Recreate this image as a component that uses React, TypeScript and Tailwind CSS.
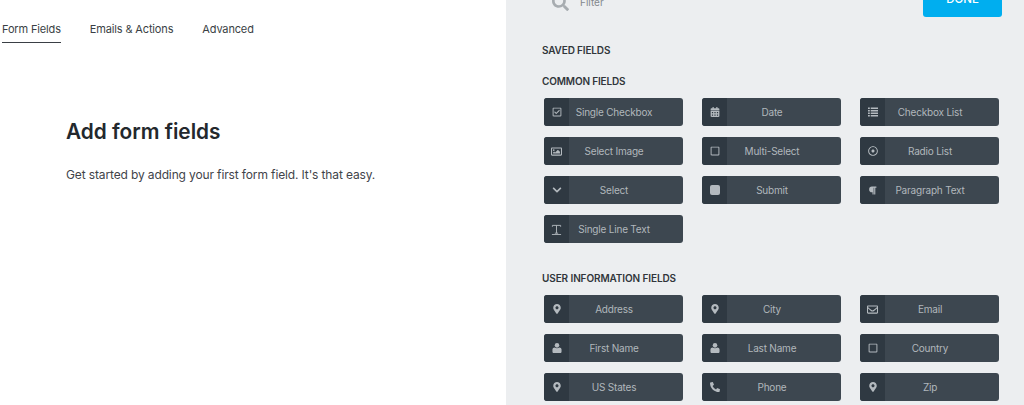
import React from "react";
import {
  FaRegCheckSquare, FaCalendarAlt, FaRegImage, FaRegSquare, FaRegDotCircle,
  FaChevronDown, FaParagraph, FaMapMarkerAlt, FaRegEnvelope, FaPhoneAlt, FaSearch,
} from "react-icons/fa";

function TextIcon({ className }: { className?: string }) {
  return (
    <svg viewBox="0 0 12 12" className={className} fill="none" stroke="currentColor">
      <path d="M1.5 3V1.5h9V3M6 1.5v8.5M4.2 10h3.6M1 11.5h10" strokeWidth="1" />
    </svg>
  );
}

function ListIcon({ className }: { className?: string }) {
  return (
    <svg viewBox="0 0 11 10" className={className} fill="currentColor">
      <path d="M0 0h2v1.6H0zM3 0h8v1.6H3zM0 2.8h2v1.6H0zM3 2.8h8v1.6H3zM0 5.6h2v1.6H0zM3 5.6h8v1.6H3zM0 8.4h2V10H0zM3 8.4h8V10H3z" />
    </svg>
  );
}

function UserIcon({ className }: { className?: string }) {
  return (
    <svg viewBox="0 0 10 11" className={className} fill="currentColor">
      <circle cx="5" cy="2.6" r="2.5" />
      <path d="M0 7.2C0 5.8 1.2 5 2.4 5c.7.5 1.6.8 2.6.8s1.9-.3 2.6-.8C8.8 5 10 5.8 10 7.2V9.6c0 .8-.6 1.4-1.4 1.4H1.400C.6 11 0 10.400 0 9.600z" />
    </svg>
  );
}

function SolidSquare({ className }: { className?: string }) {
  return (
    <svg viewBox="0 0 10 10" className={className} fill="currentColor">
      <rect width="10" height="10" rx="2" />
    </svg>
  );
}

type F = [string, React.ReactNode];
const ic = "w-[10px] h-[10px]";

const common: F[] = [
  ["Single Checkbox", <FaRegCheckSquare className={ic} />],
  ["Date", <FaCalendarAlt className={ic} />],
  ["Checkbox List", <ListIcon className={ic} />],
  ["Select Image", <FaRegImage className="w-[11px] h-[11px]" />],
  ["Multi-Select", <FaRegSquare className={ic} />],
  ["Radio List", <FaRegDotCircle className={ic} />],
  ["Select", <FaChevronDown className={ic} />],
  ["Submit", <SolidSquare className={ic} />],
  ["Paragraph Text", <FaParagraph className="w-[9px] h-[9px]" />],
  ["Single Line Text", <TextIcon className="w-[11px] h-[11px]" />],
];
const user: F[] = [
  ["Address", <FaMapMarkerAlt className={ic} />],
  ["City", <FaMapMarkerAlt className={ic} />],
  ["Email", <FaRegEnvelope className="w-[11px] h-[11px]" />],
  ["First Name", <UserIcon className={ic} />],
  ["Last Name", <UserIcon className={ic} />],
  ["Country", <FaRegSquare className={ic} />],
  ["US States", <FaMapMarkerAlt className={ic} />],
  ["Phone", <FaPhoneAlt className={ic} />],
  ["Zip", <FaMapMarkerAlt className={ic} />],
];

function Field({ label, icon }: { label: string; icon: React.ReactNode }) {
  return (
    <div className="relative flex h-[28px] w-[139px] items-center justify-center rounded-[3px] bg-[#3d4750] pl-[1px] pt-[1px] text-[10px] tracking-[-0.2px] text-[#b1b7bc]">
      <span className="absolute inset-y-0 left-0 flex w-[25px] items-center justify-center rounded-l-[3px] bg-[#2f3942] text-[#b4babf]">
        {icon}
      </span>
      {label}
    </div>
  );
}

function Grid({ items }: { items: F[] }) {
  return (
    <div className="ml-[2px] grid w-[455px] grid-cols-[139px_139px_139px] gap-x-[19px] gap-y-[11px]">
      {items.map(([l, i]) => (
        <Field key={l} label={l} icon={i} />
      ))}
    </div>
  );
}

export default function App() {
  return (
    <div
      className="flex h-[405px] w-[1024px] overflow-hidden bg-white text-[#23282d]"
      style={{ fontFamily: "Inter, sans-serif" }}
    >
      <main className="w-[506px] shrink-0">
        <nav className="flex h-[43px] items-start gap-[29px] pl-[2px] pt-[21px] text-[11px] tracking-[-0.15px] text-[#3a3f45]">
          <span className="h-[22px] border-b border-[#3a3f45] text-[#3a3f45]">Form Fields</span>
          <span>Emails &amp; Actions</span>
          <span>Advanced</span>
        </nav>
        <div className="pl-[66px] pt-[75px]">
          <h1 className="text-[20.8px] leading-[28px] font-semibold text-[#23282d]">Add form fields</h1>
          <p className="mt-[20px] text-[12px] leading-[18px] tracking-[-0.13px] text-[#3f444a]">
            Get started by adding your first form field. It's that easy.
          </p>
        </div>
      </main>
      <aside className="flex-1 bg-[#eceef0] pl-[36px]">
        <div className="-mt-[23px] flex h-[40px] items-center justify-between pr-[22px]">
          <div className="mt-[10px] flex items-center pl-[10px] text-[#a7acb0]">
            <FaSearch className="h-[17px] w-[17px]" />
            <span className="ml-[11px] text-[10px] text-[#83888d]">Filter</span>
          </div>
          <button className="h-[40px] w-[79px] rounded-[3px] bg-[#00aeef] pt-[6px] text-[11.5px] font-medium text-white">
            DONE
          </button>
        </div>
        <h2 className="mt-[27px] text-[10px] leading-[12px] font-semibold tracking-[-0.15px] text-[#31363b]">SAVED FIELDS</h2>
        <h2 className="mt-[19px] text-[10px] leading-[12px] font-semibold tracking-[-0.15px] text-[#31363b]">COMMON FIELDS</h2>
        <div className="mt-[11px]">
          <Grid items={common} />
        </div>
        <h2 className="mt-[29px] text-[10px] leading-[12px] font-semibold tracking-[-0.1px] text-[#31363b]">USER INFORMATION FIELDS</h2>
        <div className="mt-[11px]">
          <Grid items={user} />
        </div>
      </aside>
    </div>
  );
}
